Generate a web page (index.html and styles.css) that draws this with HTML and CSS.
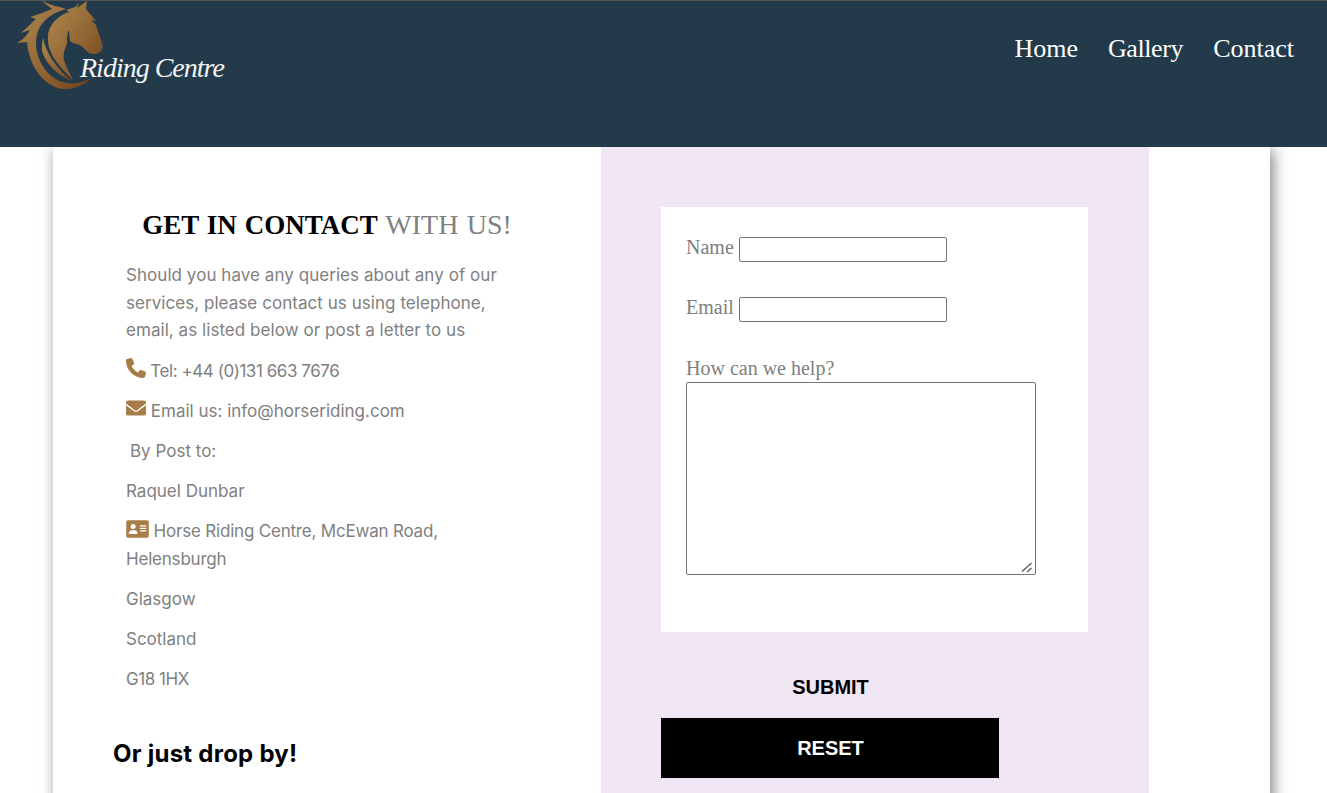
FILE: index.html
```html
<!DOCTYPE html>
<html lang="en">
<head>
    <meta charset="UTF-8">
    <meta name="viewport" content="width=device-width, initial-scale=1.0">
    <title>Contact - Riding Centre</title>
    <link rel="stylesheet" href="styles.css">
</head>
<body>

<header class="site-header">
    <a class="logo" href="#">
        <svg class="logo-horse" viewBox="0 0 110 95" width="110" height="95">
            <defs>
                <linearGradient id="horse-fill" x1="0" y1="0" x2="1" y2="1">
                    <stop offset="0" stop-color="#b08a4e"/>
                    <stop offset="0.6" stop-color="#8f6232"/>
                    <stop offset="1" stop-color="#6e3f1c"/>
                </linearGradient>
            </defs>
            <path fill="url(#horse-fill)" d="M42 1 C48 3 52 6 60 7 L66 9 C56 12 48 16 42 24 C36 32 35 42 37 52 C40 66 50 78 62 82 C72 85 82 83 92 78 C84 85 74 90 63 89 C44 87 29 66 27 42 L17 43 C24 39 27 35 30 30 L21 33 C26 29 30 24 36 19 L30 17 C38 15 44 12 52 9 Z"/>
            <path fill="url(#horse-fill)" d="M48 36 C48 27 56 16 69 12 L66 10 L75 7 L79 3 L77 8 L87 1 L86 9 L96 21 L91 20 L96 25 L102 43 C104 50 100 54 94 54 C88 54 85 49 80 45 C76 44 72 43 70 41 L69 30 C67 33 67 38 67 44 C64 50 63 56 64 60 C66 68 71 74 73 81 C66 72 54 62 50 50 C48 46 48 41 48 36 Z"/>
            <path fill="url(#horse-fill)" d="M43 38 C46 52 54 66 72 81 C58 76 44 62 42 50 C42 46 42 42 43 38 Z"/>
        </svg>
        <span class="logo-text">Riding Centre</span>
    </a>
    <nav class="main-nav">
        <a href="#">Home</a>
        <a class="nav-gallery" href="#">Gallery</a>
        <a href="#">Contact</a>
    </nav>
</header>

<main class="contact-panel">
    <section class="contact-info">
        <h1 class="contact-title">GET IN CONTACT <span>WITH US!</span></h1>
        <p class="intro">Should you have any queries about any of our services, please contact us using telephone, email, as listed below or post a letter to us</p>
        <p class="tight">
            <svg class="icon icon-phone" viewBox="0 0 512 512"><path d="M164.9 24.6c-7.7-18.6-28-28.5-47.4-23.2l-88 24C12.1 30.2 0 46 0 64C0 311.4 200.6 512 448 512c18 0 33.8-12.1 38.6-29.5l24-88c5.3-19.4-4.6-39.7-23.2-47.4l-96-40c-16.3-6.8-35.2-2.1-46.3 11.6L304.7 368C234.3 334.7 177.3 277.7 144 207.3L193.3 167c13.7-11.2 18.4-30 11.6-46.3l-40-96z"/></svg>
            Tel: +44 (0)131 663 7676
        </p>
        <p>
            <svg class="icon icon-mail" viewBox="0 0 512 512"><path d="M502.3 190.8c3.9-3.1 9.7-.2 9.7 4.7V400c0 26.5-21.5 48-48 48H48c-26.5 0-48-21.5-48-48V195.6c0-5 5.7-7.8 9.7-4.7 22.4 17.4 52.1 39.5 154.1 113.6 21.1 15.4 56.7 47.8 92.2 47.6 35.7.3 72-32.8 92.3-47.6 102-74.1 131.6-96.3 154-113.7zM256 320c23.2.4 56.6-29.2 73.4-41.4 132.7-96.3 142.8-104.7 173.4-128.7 5.8-4.5 9.2-11.5 9.2-18.9v-19c0-26.5-21.5-48-48-48H48C21.5 64 0 85.5 0 112v19c0 7.4 3.4 14.3 9.2 18.9 30.6 23.9 40.7 32.4 173.4 128.7 16.8 12.2 50.2 41.8 73.4 41.4z"/></svg>
            Email us: info@horseriding.com
        </p>
        <p class="by-post">By Post to:</p>
        <p>Raquel Dunbar</p>
        <p class="address">
            <svg class="icon icon-card" viewBox="0 0 576 512">
                <rect x="0" y="32" width="576" height="448" rx="48"/>
                <circle cx="176" cy="192" r="64" fill="#fff"/>
                <path fill="#fff" d="M64 368c0-50 40-80 80-80h64c40 0 80 30 80 80 0 10-8 16-16 16H80c-8 0-16-6-16-16z"/>
                <rect x="352" y="160" width="160" height="32" rx="8" fill="#fff"/>
                <rect x="352" y="224" width="160" height="32" rx="8" fill="#fff"/>
                <rect x="352" y="288" width="160" height="32" rx="8" fill="#fff"/>
            </svg>
            Horse Riding Centre, McEwan Road, Helensburgh
        </p>
        <p>Glasgow</p>
        <p>Scotland</p>
        <p class="tight">G18 1HX</p>
        <h2 class="drop-by">Or just drop by!</h2>
    </section>

    <section class="contact-form-col">
        <form class="contact-form">
            <div class="form-row">
                <label for="name">Name</label>
                <input type="text" id="name">
            </div>
            <div class="form-row">
                <label for="email">Email</label>
                <input type="text" id="email">
            </div>
            <label class="help-label" for="help">How can we help?</label>
            <div class="textarea-wrap">
                <textarea id="help"></textarea>
                <svg class="resize-grip" viewBox="0 0 12 12" width="12" height="12">
                    <path d="M1 10.5 L10.5 2 M6 11 L10.5 7" stroke="#555" stroke-width="1.2" fill="none"/>
                </svg>
            </div>
        </form>
        <button class="btn btn-submit" type="button">SUBMIT</button>
        <button class="btn btn-reset" type="button">RESET</button>
    </section>
</main>

</body>
</html>
```

FILE: styles.css
```css
html, body {
    margin: 0;
    height: 793px;
    overflow: hidden;
    background-color: #fff;
}

/* Header */
.site-header {
    display: flex;
    justify-content: space-between;
    align-items: flex-start;
    height: 146px;
    background-color: #223a4a;
    border-top: 1px solid #555;
    position: relative;
    z-index: 2;
}

.logo {
    display: flex;
    align-items: flex-start;
    color: #fff;
    text-decoration: none;
}

.logo-horse {
    display: block;
    flex: none;
    margin-top: -1px;
}

.logo-text {
    font-family: "Liberation Serif", serif;
    font-style: italic;
    font-size: 28px;
    letter-spacing: -1px;
    margin: 51px 0 0 -30px;
    color: #f2f4f5;
    white-space: nowrap;
}

.main-nav {
    display: flex;
    gap: 30px;
    padding: 33px 33px 0 0;
}

.main-nav a {
    font-family: "Liberation Serif", serif;
    font-size: 26px;
    color: #fff;
    text-decoration: none;
}

.main-nav .nav-gallery {
    letter-spacing: -0.4px;
}

/* Main panel */
.contact-panel {
    display: flex;
    width: 1217px;
    margin-left: 53px;
    background-color: #fff;
    box-shadow: 3px 3px 14px rgba(0, 0, 0, 0.5);
    height: 700px;
}

.contact-info {
    width: 402px;
    padding: 60px 73px 0;
    font-family: "Inter", sans-serif;
    font-size: 17px;
    line-height: 28px;
    color: #808080;
}

.contact-info p {
    margin: 0 0 12px;
}

.contact-info .intro {
    line-height: 27.5px;
    letter-spacing: 0.05px;
    margin-bottom: 12.5px;
}

.contact-info .tight {
    letter-spacing: -0.45px;
}

.contact-info .address {
    letter-spacing: -0.2px;
}

.contact-title {
    font-family: "Liberation Serif", serif;
    font-size: 27px;
    line-height: 35px;
    font-weight: bold;
    word-spacing: 1.3px;
    color: #000;
    text-align: center;
    margin: 0 -20px 19px;
}

.contact-title span {
    font-size: 28px;
    font-weight: normal;
    color: #808080;
}

.by-post {
    padding-left: 4px;
}

.icon {
    fill: #a67c48;
    vertical-align: -1px;
}

.icon-phone {
    width: 20px;
    height: 20px;
}

.icon-mail {
    width: 20px;
    height: 20px;
}

.icon-card {
    width: 23px;
    height: 20px;
    vertical-align: -2px;
}

.drop-by {
    font-family: "Inter", sans-serif;
    font-size: 24px;
    font-weight: 700;
    letter-spacing: 0.25px;
    line-height: 34px;
    color: #000;
    margin: 44px 0 0 -13px;
}

/* Form column */
.contact-form-col {
    width: 488px;
    padding: 60px 0 0 60px;
    background-color: #f1e6f4;
}

.contact-form {
    box-sizing: border-box;
    width: 427px;
    height: 425px;
    padding: 30px 25px;
    background-color: #fff;
    font-family: "Liberation Serif", serif;
    font-size: 20px;
    color: #808080;
    margin-bottom: 26px;
}

.form-row {
    display: flex;
    align-items: flex-start;
    gap: 5px;
    height: 25px;
    margin-bottom: 35px;
}

.form-row label {
    line-height: 21px;
}

.form-row input {
    box-sizing: border-box;
    width: 208px;
    height: 25px;
    margin: 0;
    border: 1px solid #767676;
    border-radius: 2px;
}

.help-label {
    display: block;
    line-height: 23px;
    margin-bottom: 2px;
}

.textarea-wrap {
    position: relative;
    width: 350px;
}

.contact-form textarea {
    display: block;
    box-sizing: border-box;
    width: 350px;
    height: 193px;
    margin: 0;
    border: 1px solid #767676;
    border-radius: 2px;
    resize: none;
}

.resize-grip {
    position: absolute;
    right: 3px;
    bottom: 2px;
}

.btn {
    display: block;
    width: 338px;
    height: 60px;
    padding: 0 0 0 1px;
    border: none;
    font-family: "Liberation Sans", sans-serif;
    font-size: 20px;
    font-weight: bold;
}

.btn-submit {
    padding-bottom: 2px;
    background-color: transparent;
    color: #000;
}

.btn-reset {
    background-color: #000;
    color: #fff;
}
```
